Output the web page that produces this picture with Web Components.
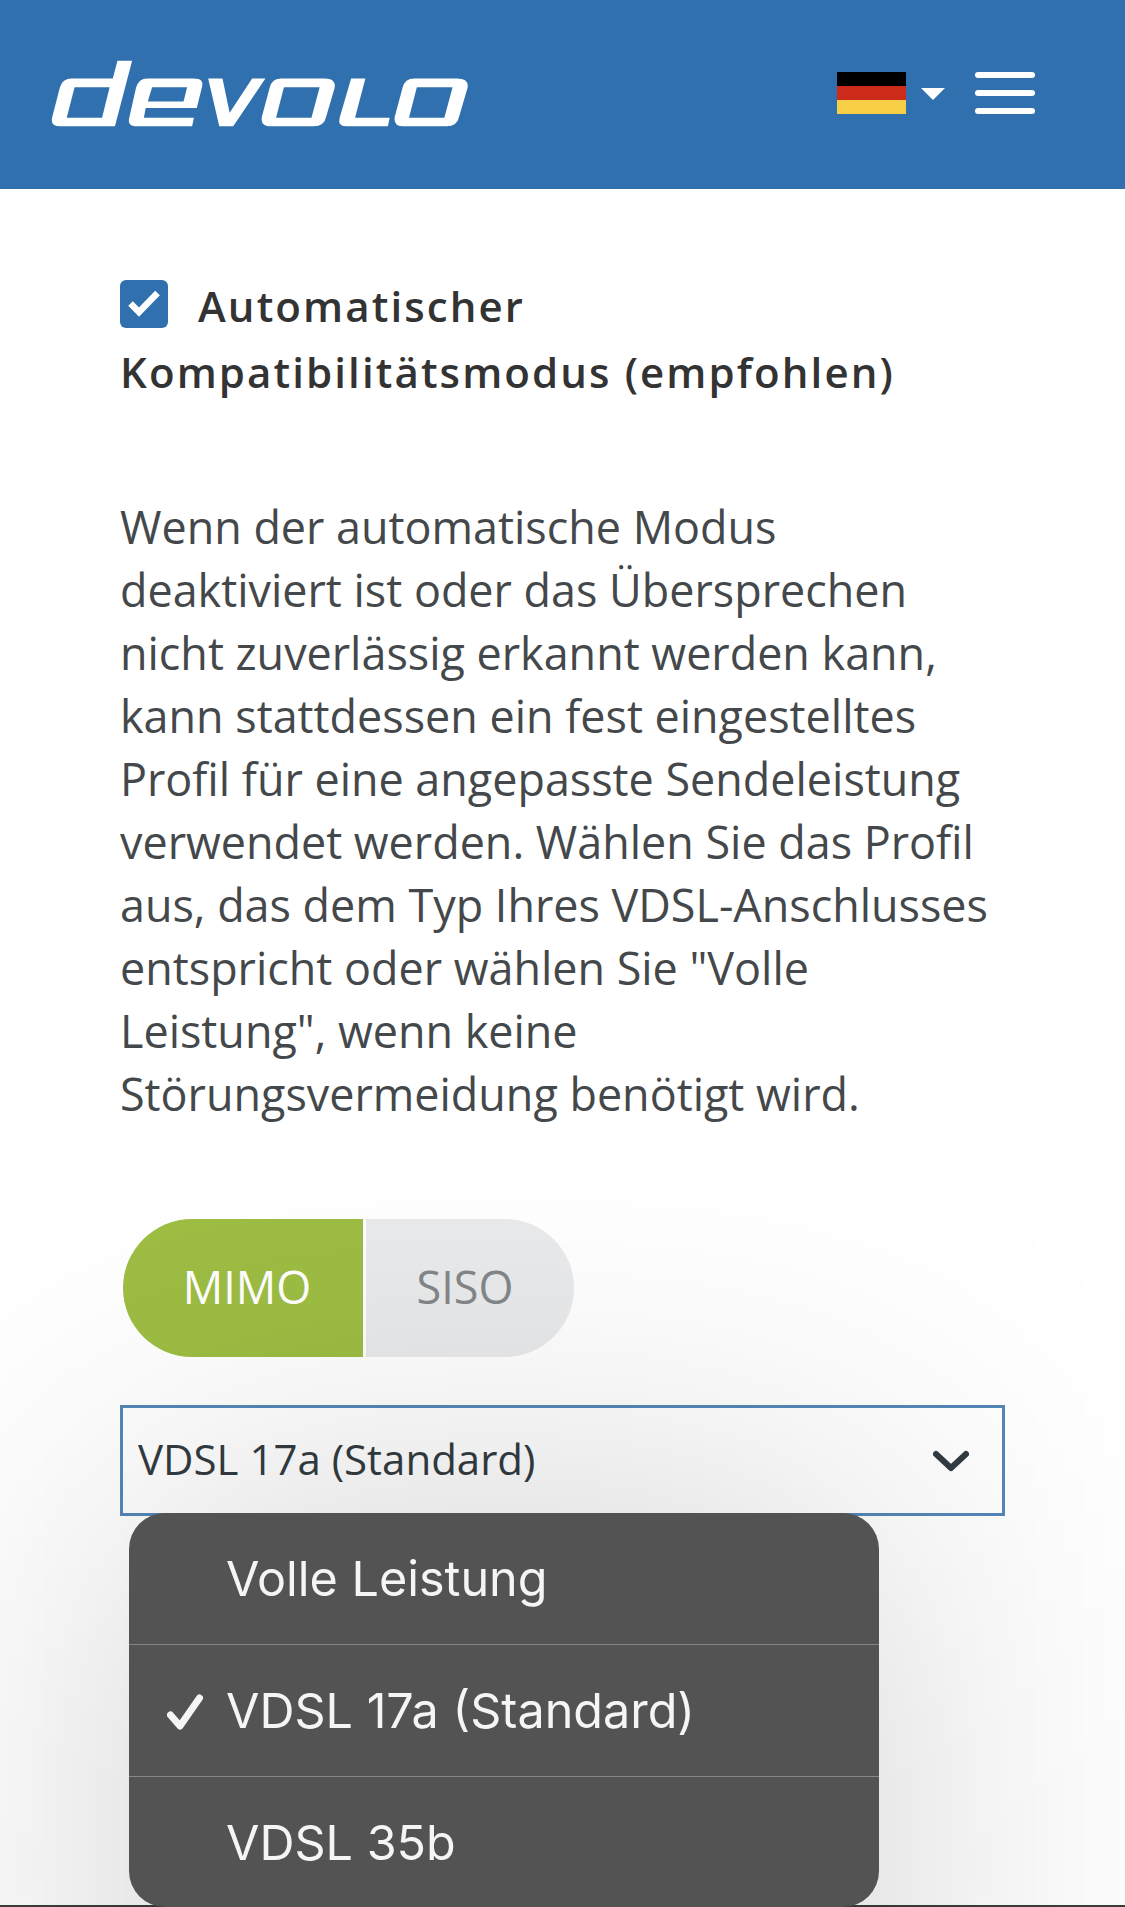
<!DOCTYPE html>
<html lang="de">
<head>
<meta charset="utf-8">
<title>devolo</title>
<style>
    html, body { margin: 0; padding: 0; background: #fff; }
    body { height: 1907px; overflow: hidden; font-family: "Open Sans", sans-serif; }
</style>
</head>
<body>
<app-page>
    <app-header></app-header>
    <compat-check>Automatischer Kompatibilitätsmodus (empfohlen)</compat-check>
    <info-text>Wenn der automatische Modus deaktiviert ist oder das Übersprechen nicht zuverlässig erkannt werden kann, kann stattdessen ein fest eingestelltes Profil für eine angepasste Sendeleistung verwendet werden. Wählen Sie das Profil aus, das dem Typ Ihres VDSL-Anschlusses entspricht oder wählen Sie "Volle Leistung", wenn keine Störungsvermeidung benötigt wird.</info-text>
    <mode-toggle></mode-toggle>
    <profile-select>
        VDSL 17a (Standard)
        <picker-option slot="menu">Volle Leistung</picker-option>
        <picker-option slot="menu" selected>VDSL 17a (Standard)</picker-option>
        <picker-option slot="menu">VDSL 35b</picker-option>
    </profile-select>
</app-page>

<script>
class AppPage extends HTMLElement {
    constructor() {
        super();
        this.shadowDOM = this.attachShadow({ mode: 'open' });
        this.shadowDOM.innerHTML = `
        <style>
            :host {
                display: flex;
                flex-direction: column;
                height: 1907px;
            }
            .bottom {
                margin-top: auto;
                height: 2px;
                background: #3d3d3d;
            }
        </style>
        <slot></slot>
        <div class="bottom"></div>
        `;
    }
}

class AppHeader extends HTMLElement {
    constructor() {
        super();
        this.shadowDOM = this.attachShadow({ mode: 'open' });
        this.shadowDOM.innerHTML = `
        <style>
            :host {
                display: flex;
                align-items: flex-start;
                height: 189px;
                background: #3070ae;
                padding: 60px 90px 0 51px;
                box-sizing: border-box;
            }
            .logo { display: block; width: 418px; height: 67px; }
            .lang { display: flex; align-items: center; margin: 12px 30px 0 auto; }
            .flag { width: 69px; height: 42px; display: grid; grid-template-rows: repeat(3, 1fr); }
            .flag i:nth-child(1) { background: #000; }
            .flag i:nth-child(2) { background: #cc2b1a; }
            .flag i:nth-child(3) { background: #f7cf47; }
            .caret {
                width: 0; height: 0;
                margin-left: 15px;
                margin-top: 1px;
                border-left: 12px solid transparent;
                border-right: 12px solid transparent;
                border-top: 12px solid #fff;
            }
            .burger { display: grid; gap: 12px; margin-top: 12px; width: 60px; }
            .burger i { height: 6px; border-radius: 3px; background: #fff; }
        </style>
        <svg class="logo" viewBox="140 178 1170 202" preserveAspectRatio="none" fill="#fff" fill-rule="evenodd">
            <path d="M326 180H367L319 378H165Q138 378 143 352L165 260Q172 234 198 234H313ZM206 260H304L283 352H184Z"/>
            <path d="M410 234H540Q568 234 563 258L548 323H405L400 352H540L535 378H380Q353 378 359 352L378 262Q385 234 410 234ZM423 260H521L511 303H411Z"/>
            <path d="M580 234H620L640 337L703 234H740L650 378H611Z"/>
            <path d="M785 234H905Q938 234 934 262L910 350Q905 378 875 378H755Q726 378 730 350L752 262Q758 234 785 234ZM792 260H892L869 352H770Z"/>
            <path d="M980 234H1020L991 352H1088L1083 378H965Q942 378 948 352Z"/>
            <path d="M1157 234H1277Q1310 234 1306 262L1282 350Q1277 378 1247 378H1127Q1098 378 1102 350L1124 262Q1130 234 1157 234ZM1164 260H1264L1241 352H1142Z"/>
        </svg>
        <div class="lang">
            <div class="flag"><i></i><i></i><i></i></div>
            <div class="caret"></div>
        </div>
        <div class="burger"><i></i><i></i><i></i></div>
        `;
    }
}

class CompatCheck extends HTMLElement {
    constructor() {
        super();
        this.shadowDOM = this.attachShadow({ mode: 'open' });
        this.shadowDOM.innerHTML = `
        <style>
            :host {
                display: block;
                margin: 84px 120px 0;
                font: 600 42px/66px "Open Sans", sans-serif;
                letter-spacing: 2.1px;
                color: #333;
            }
            .box {
                display: inline-block;
                width: 48px;
                height: 48px;
                margin-right: 30px;
                border-radius: 6px;
                background: #3070ae;
                vertical-align: -6px;
            }
            svg { display: block; width: 48px; height: 48px; }
        </style>
        <span class="box"><svg viewBox="0 0 48 48"><path d="M10.5 23.5L19 32L37.5 13" fill="none" stroke="#fff" stroke-width="6.5"/></svg></span><slot></slot>
        `;
    }
}

class InfoText extends HTMLElement {
    constructor() {
        super();
        this.shadowDOM = this.attachShadow({ mode: 'open' });
        this.shadowDOM.innerHTML = `
        <style>
            :host {
                display: block;
                margin: 90px 120px 0;
                font: 400 44.9px/63px "Open Sans", sans-serif;
                color: #44484b;
            }
        </style>
        <slot></slot>
        `;
    }
}

class ModeToggle extends HTMLElement {
    constructor() {
        super();
        this.shadowDOM = this.attachShadow({ mode: 'open' });
        this.shadowDOM.innerHTML = `
        <style>
            :host {
                display: flex;
                gap: 3px;
                width: 451px;
                height: 138px;
                margin: 94px 0 0 123px;
                font: 400 45px "Open Sans", sans-serif;
            }
            div { display: flex; align-items: center; justify-content: center; box-sizing: border-box; padding-bottom: 4px; }
            .on { width: 240px; padding-left: 8px; background: #9dbd43; color: #fff; border-radius: 69px 0 0 69px; }
            .off { flex: 1; padding-right: 10px; background: #e9eaeb; color: #84878a; border-radius: 0 69px 69px 0; }
        </style>
        <div class="on">MIMO</div>
        <div class="off">SISO</div>
        `;
    }
}

class ProfileSelect extends HTMLElement {
    constructor() {
        super();
        this.shadowDOM = this.attachShadow({ mode: 'open' });
        this.shadowDOM.innerHTML = `
        <style>
            :host {
                display: block;
                position: relative;
                height: 111px;
                margin: 48px 120px 0;
                box-sizing: border-box;
                border: 3px solid #5488b8;
                font: 400 42px "Open Sans", sans-serif;
                color: #333c42;
            }
            .value {
                display: flex;
                align-items: center;
                justify-content: space-between;
                height: 100%;
                box-sizing: border-box;
                padding: 0 33px 0 15px;
            }
            .value span { margin-bottom: 4px; }
            svg { width: 36px; height: 22px; }
            .halo-clip {
                position: absolute;
                left: -123px;
                top: -500px;
                width: 1125px;
                height: 999px;
                overflow: hidden;
                pointer-events: none;
            }
            .halo {
                position: absolute;
                left: 129px;
                top: 605px;
                width: 750px;
                height: 700px;
                background: rgba(0, 0, 0, .18);
                filter: blur(180px);
            }
            .menu {
                position: absolute;
                left: 6px;
                top: 105px;
                width: 750px;
                height: 394px;
                border-radius: 36px;
                overflow: hidden;
                background: #535353;
                display: grid;
                grid-template-rows: 131px 131px 130px;
                gap: 1px;
            }
        </style>
        <div class="value">
            <span><slot></slot></span>
            <svg viewBox="0 0 36 22"><path d="M3 4L18 18L33 4" fill="none" stroke="#333c42" stroke-width="6" stroke-linecap="round" stroke-linejoin="round"/></svg>
        </div>
        <div class="halo-clip"><div class="halo"></div></div>
        <div class="menu"><slot name="menu"></slot></div>
        `;
    }
}

class PickerOption extends HTMLElement {
    constructor() {
        super();
        this.shadowDOM = this.attachShadow({ mode: 'open' });
        this.shadowDOM.innerHTML = `
        <style>
            :host {
                display: flex;
                align-items: center;
                position: relative;
                padding-left: 97px;
                font: 400 48.5px Inter, "Noto Sans", sans-serif;
                color: #f5f5f5;
            }
            :host(:not(:last-child))::after {
                content: "";
                position: absolute;
                left: 0;
                right: 0;
                bottom: -1px;
                height: 1px;
                background: #868686;
            }
            svg { display: none; position: absolute; left: 38px; top: 49px; width: 36px; height: 36px; }
            :host([selected]) svg { display: block; }
        </style>
        <svg viewBox="0 0 36 36"><path d="M3.5 21L13 32L32.5 4" fill="none" stroke="#f5f5f5" stroke-width="7" stroke-linecap="round" stroke-linejoin="round"/></svg>
        <slot></slot>
        `;
    }
}

customElements.define('app-page', AppPage);
customElements.define('app-header', AppHeader);
customElements.define('compat-check', CompatCheck);
customElements.define('info-text', InfoText);
customElements.define('mode-toggle', ModeToggle);
customElements.define('profile-select', ProfileSelect);
customElements.define('picker-option', PickerOption);
</script>
</body>
</html>
